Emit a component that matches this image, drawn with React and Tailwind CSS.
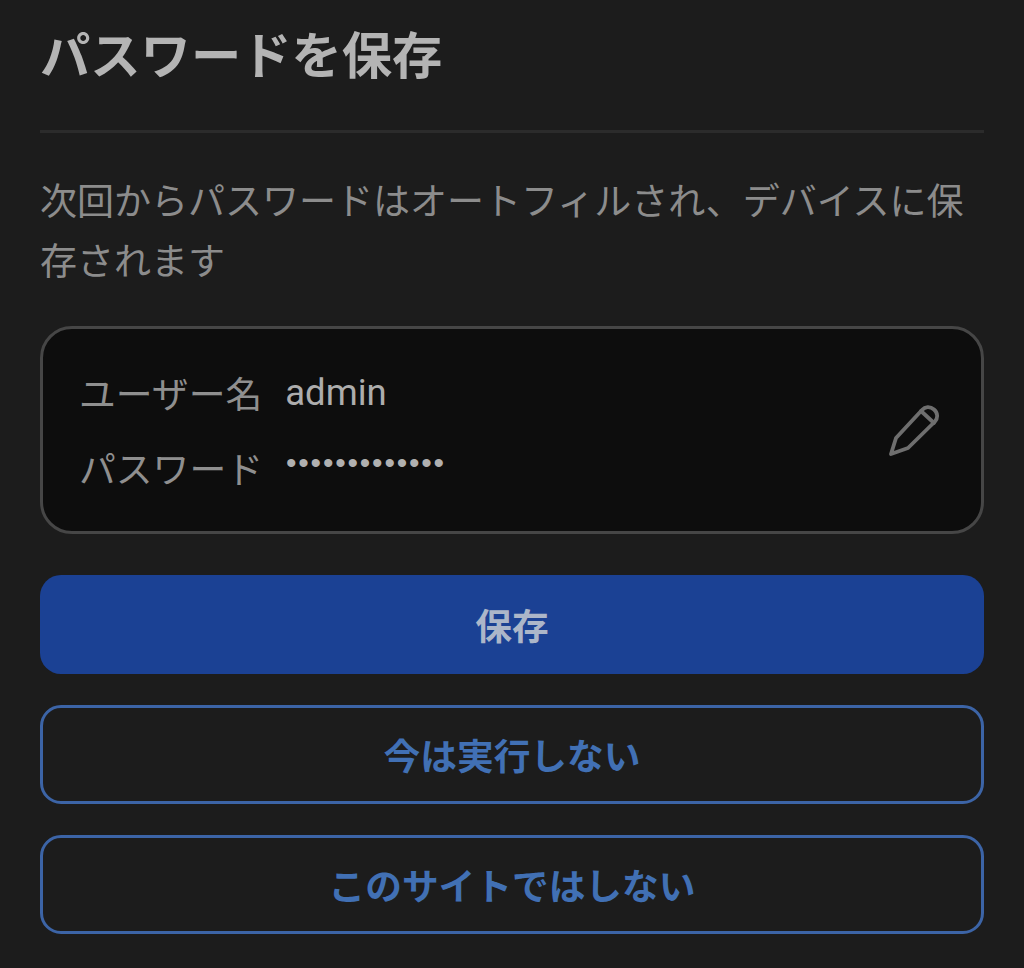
const jp = "font-['Roboto','Noto_Sans_CJK_JP',sans-serif]";

function OutlineButton({ children }) {
  return (
    <button className="flex h-[99px] w-full items-center justify-center rounded-[21px] border-[3px] border-[#3c64a6] pt-[7px] text-[36.7px] font-bold text-[#4170b4]">
      {children}
    </button>
  );
}

export default function App() {
  return (
    <div className={`h-[968px] w-[1024px] overflow-hidden bg-[#1c1c1c] px-10 ${jp}`}>
      <h1 className="h-[130px] pt-[27px] text-[50.3px] leading-[60px] font-bold text-[#b4b4b4]">
        パスワードを保存
      </h1>
      <div className="h-[3px] bg-[#2b2b2b]" />
      <p className="mt-[40px] text-[37px] leading-[60px] text-[#8c8c8c]">
        次回からパスワードはオートフィルされ、デバイスに保存されます
      </p>
      <div className="mt-[33px] flex h-[208px] items-center justify-between rounded-[32px] border-[3px] border-[#464646] bg-[#0d0d0d] pr-[41px] pl-[36px]">
        <div className="flex flex-col gap-[31px] pt-[6px]">
          <div className="flex h-[44px] items-center gap-[23px]">
            <span className="text-[36.8px] leading-[44px] text-[#8f8f8f]">ユーザー名</span>
            <span className="-mt-[5px] text-[36.5px] leading-[44px] text-[#adadad]">admin</span>
          </div>
          <div className="flex h-[44px] items-center gap-[23px]">
            <span className="text-[36.8px] leading-[44px] text-[#8f8f8f]">パスワード</span>
            <span className="-mt-[16px] font-['Liberation_Sans',sans-serif] text-[30px] leading-[44px] tracking-[1.8px] text-[#b0b0b0]">
              •••••••••••••
            </span>
          </div>
        </div>
        <svg width="52" height="52" viewBox="0 0 52 52" fill="none" stroke="#6e6e6e" strokeWidth="3.8" strokeLinejoin="round" strokeLinecap="round">
          <path d="M3 50 L8 34 L34 6 C37 2.500 42 2 46 5.500 C50 9 50 14 47 17.500 L20 44 Z" />
          <path d="M33 7 L46 19" />
        </svg>
      </div>
      <button className="mt-[41px] flex h-[99px] w-full items-center justify-center rounded-[21px] bg-[#1b4194] pt-[7px] text-[36.7px] font-bold text-[#acb6c9]">
        保存
      </button>
      <div className="mt-[31px] flex flex-col gap-[31px]">
        <OutlineButton>今は実行しない</OutlineButton>
        <OutlineButton>このサイトではしない</OutlineButton>
      </div>
    </div>
  );
}
